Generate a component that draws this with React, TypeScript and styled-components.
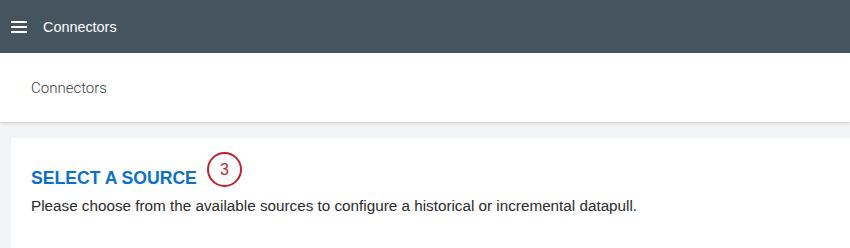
import React from "react";
import styled, { createGlobalStyle } from "styled-components";

const Global = createGlobalStyle`
  html, body { margin: 0; padding: 0; background: #f3f4f6; }
  body { font-family: "Liberation Sans", Arial, sans-serif; }
`;

const Page = styled.div`
  display: flex;
  flex-direction: column;
  height: 248px;
  overflow: hidden;
  background: #f3f4f6;
`;

const TopBar = styled.header`
  height: 53px;
  flex: none;
  background: #46545f;
  display: flex;
  align-items: center;
  padding-left: 11px;
  gap: 16px;
  color: #fff;
`;

const Burger = styled.svg`
  width: 16px;
  height: 14px;
  display: block;
`;

const TopTitle = styled.span`
  font-size: 14.4px;
  font-weight: 400;
`;

const PageHeader = styled.div`
  height: 69px;
  flex: none;
  background: #fff;
  display: flex;
  align-items: center;
  padding-left: 31px;
  box-shadow: 0 1px 3px rgba(0, 0, 0, 0.18);
  position: relative;
  z-index: 1;
`;

const HeaderTitle = styled.h1`
  margin: 0;
  font-family: Roboto, "Liberation Sans", sans-serif;
  font-weight: 300;
  font-size: 15px;
  color: #3c3c3c;
`;

const Body = styled.main`
  padding: 16px 0 0 11px;
  flex: 1;
  display: flex;
`;

const Card = styled.section`
  background: #fff;
  flex: 1;
  padding: 14px 20px 20px 20px;
`;

const TitleRow = styled.div`
  display: flex;
  align-items: flex-start;
  gap: 10px;
`;

const SectionTitle = styled.h2`
  margin: 16px 0 0;
  font-size: 17.6px;
  line-height: normal;
  font-weight: 700;
  color: #0a70d0;
`;

const Badge = styled.span`
  width: 35px;
  height: 35px;
  box-sizing: border-box;
  border: 2.5px solid #c3202f;
  border-radius: 50%;
  color: #c3202f;
  font-size: 16px;
  display: inline-flex;
  align-items: center;
  justify-content: center;
`;

const Description = styled.p`
  margin: 8px 0 0;
  font-size: 15.25px;
  line-height: normal;
  color: #2b2b2b;
`;

export default function App() {
  return (
    <>
      <Global />
      <Page>
        <TopBar>
          <Burger viewBox="0 0 16 14">
            <rect x="0" y="1" width="16" height="2" fill="#fff" />
            <rect x="0" y="6" width="16" height="2" fill="#fff" />
            <rect x="0" y="11" width="16" height="2" fill="#fff" />
          </Burger>
          <TopTitle>Connectors</TopTitle>
        </TopBar>
        <PageHeader>
          <HeaderTitle>Connectors</HeaderTitle>
        </PageHeader>
        <Body>
          <Card>
            <TitleRow>
              <SectionTitle>SELECT A SOURCE</SectionTitle>
              <Badge>3</Badge>
            </TitleRow>
            <Description>
              Please choose from the available sources to configure a historical or incremental datapull.
            </Description>
          </Card>
        </Body>
      </Page>
    </>
  );
}
